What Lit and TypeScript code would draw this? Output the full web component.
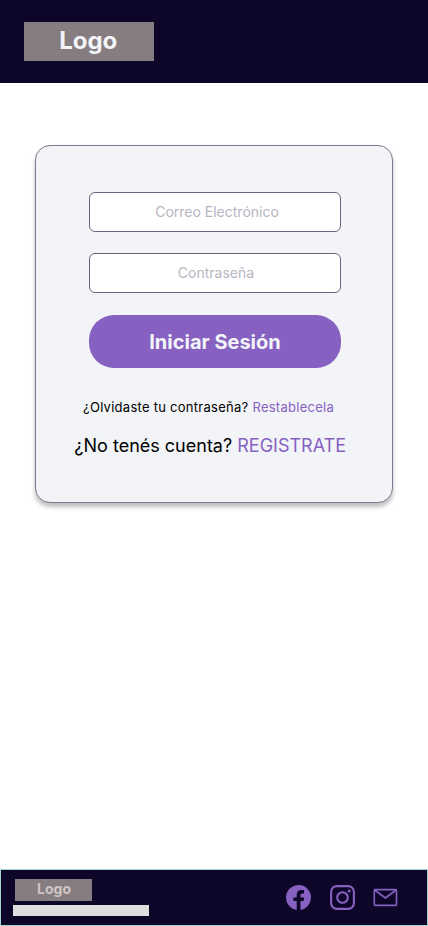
import { LitElement, html, css } from "lit";
import { customElement } from "lit/decorators.js";

@customElement("app-root")
export class AppRoot extends LitElement {
  static styles = css`
    :host {
      display: flex;
      flex-direction: column;
      height: 926px;
      width: 100%;
      background: #fff;
      font-family: Inter, "Liberation Sans", sans-serif;
      color: #000;
    }
    * { box-sizing: border-box; }
    a { color: #8661c1; text-decoration: none; }
    header {
      flex: none;
      height: 83px;
      padding: 22px 24px;
      background: #0d0628;
    }
    .logo {
      display: flex;
      align-items: center;
      justify-content: center;
      background: #857d7f;
    }
    .logo.big {
      width: 130px;
      height: 38.7px;
      padding: 0 1.5px 2px 0;
      font-size: 24px;
      font-weight: 700;
      line-height: 29px;
      color: #f2f4f8;
    }
    .logo.small {
      width: 77px;
      height: 21.7px;
      margin-left: 2px;
      padding: 0 0 2px 1px;
      font-size: 14px;
      font-weight: 700;
      line-height: 17px;
      color: #d0c4c5;
    }
    main { flex: 1; padding: 62px 35px 0; }
    .card {
      height: 358px;
      padding: 46px 51px 0 53px;
      border: 1px solid #7d7891;
      border-radius: 15px;
      background: #f2f4f8;
      box-shadow: 0 4px 4px rgba(0, 0, 0, 0.25);
      display: flex;
      flex-direction: column;
      align-items: stretch;
    }
    input {
      display: block;
      width: 252px;
      height: 40px;
      margin: 0 0 21px;
      padding: 0 0 2px 4px;
      border: 1px solid #69647f;
      border-radius: 6px;
      background: #fff;
      font: 400 14px/17px Inter, sans-serif;
      text-align: center;
      outline: none;
    }
    input[type="password"] { padding-left: 2px; }
    input::placeholder { color: #b8b5c1; opacity: 1; }
    button {
      width: 252px;
      height: 53px;
      margin: 1px 0 0;
      padding: 0;
      border: 0;
      border-radius: 25px;
      background: #8661c1;
      color: #f2f4f8;
      font: 700 20px/24px Inter, sans-serif;
    }
    p { margin: 0; white-space: nowrap; }
    .forgot { margin: 31px 0 0 -6px; font-size: 13px; line-height: 16px; letter-spacing: 0.27px; }
    .register { margin: 20px 0 0 -14.7px; font-size: 18px; line-height: 22px; }
    footer {
      flex: none;
      height: 57px;
      padding: 9px 29px 0 12px;
      border: 1px solid #a5d5d1;
      background: #0d0628;
      display: flex;
      justify-content: space-between;
    }
    .bar { width: 136px; height: 11px; margin-top: 4.3px; background: #dedede; }
    .social { display: flex; height: 38px; align-items: center; gap: 18px; }
    .social a { display: block; }
    svg { display: block; }
  `;

  render() {
    return html`
      <header><div class="logo big">Logo</div></header>
      <main>
        <form class="card">
          <input type="email" placeholder="Correo Electrónico" />
          <input type="password" placeholder="Contraseña" />
          <button type="button">Iniciar Sesión</button>
          <p class="forgot">¿Olvidaste tu contraseña? <a href="#">Restablecela</a></p>
          <p class="register">¿No tenés cuenta? <a href="#">REGISTRATE</a></p>
        </form>
      </main>
      <footer>
        <div>
          <div class="logo small">Logo</div>
          <div class="bar"></div>
        </div>
        <nav class="social">
          <a href="#" aria-label="Facebook">
            <svg width="26" height="26" viewBox="0 0 26 26" fill="#8661c1">
              <path d="M25 12.6A12.5 12.5 0 1 0 10.7 24.9V16H7.4V12.4H10.7V10C10.7 6.7 12.6 5.1 15.4 5.1C16.7 5.1 18 5.3 18 5.3V8.4H16.6C15 8.4 14.5 9.3 14.5 10.3V12.4H18.2L17.6 16H14.5V24.9A12.5 12.5 0 0 0 25 12.6Z" />
            </svg>
          </a>
          <a href="#" aria-label="Instagram">
            <svg width="25" height="26" viewBox="0 0 25 26" fill="none" stroke="#8661c1" stroke-width="2.1">
              <rect x="1.1" y="1.1" width="22.8" height="22.8" rx="5.8" />
              <circle cx="12.5" cy="12.5" r="5.3" />
              <circle cx="19.2" cy="5.9" r="1.5" fill="#8661c1" stroke="none" />
            </svg>
          </a>
          <a href="#" aria-label="Correo">
            <svg width="25" height="26" viewBox="0 0 25 26" fill="none" stroke="#8661c1" stroke-width="1.6" stroke-linejoin="round">
              <rect x="1.3" y="4.6" width="22.2" height="15.8" rx="0.8" />
              <path d="m1.6 5 10.8 8 10.8-8" />
            </svg>
          </a>
        </nav>
      </footer>
    `;
  }
}
